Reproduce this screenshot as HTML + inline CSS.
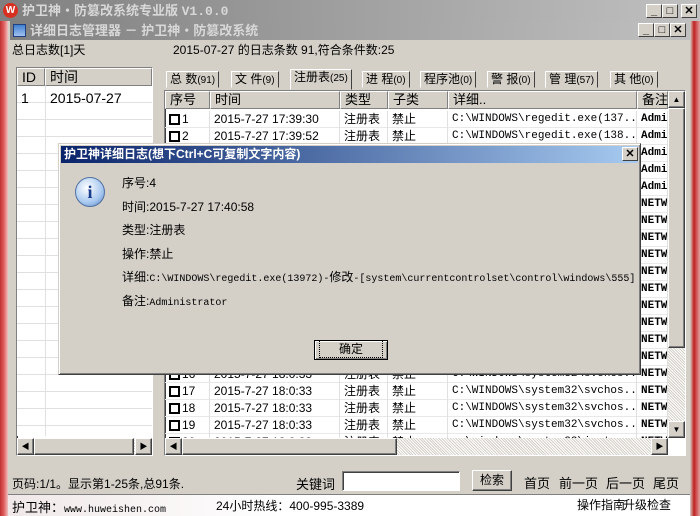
<!DOCTYPE html>
<html><head><meta charset="utf-8"><style>
*{box-sizing:border-box;margin:0;padding:0}
body{width:700px;height:516px;overflow:hidden;background:#d4d0c8;font-family:"Liberation Sans","WenQuanYi Zen Hei","Noto Sans CJK SC",sans-serif;font-size:12px;color:#000;position:relative}
.a{position:absolute;white-space:nowrap}
.tb{background:linear-gradient(90deg,#808080,#c0c0c0);color:#d8d8d8;font-weight:bold;font-size:13px}
.btn{background:#d4d0c8;border:1px solid;border-color:#fff #404040 #404040 #fff;box-shadow:inset -1px -1px #808080}
.sunk{border:1px solid;border-color:#808080 #fff #fff #808080;box-shadow:inset 1px 1px #404040}
.wbtn{position:absolute;width:16px;height:14px;background:#d4d0c8;border:1px solid;border-color:#fff #404040 #404040 #fff;font-size:11px;line-height:12px;text-align:center;font-weight:bold}
.hdr{position:absolute;top:0;height:18px;background:#d4d0c8;border-right:1px solid #808080;border-bottom:1px solid #808080;border-left:1px solid #fff;border-top:1px solid #fff;padding-left:4px;line-height:16px;font-size:13px}
.row{position:absolute;left:0;height:17px;border-bottom:1px solid #e8e8e8;width:503px;font-size:12px;line-height:16px}
.c{position:absolute;top:0;height:17px;border-right:1px solid #e0e0e0;padding-left:4px;overflow:hidden}
.mono{font-family:"Liberation Mono",monospace;font-size:11px}
.cb{display:inline-block;width:11px;height:11px;border:2px solid #000;vertical-align:-2px;margin-right:2px;background:#fff}
.tab{position:absolute;top:71px;height:17px;border:1px solid;border-color:#fff #404040 transparent #fff;padding:0 3px;line-height:15px;font-size:12px}
.sb{background:#e8e8e8;background-image:repeating-linear-gradient(45deg,#fff 0 1px,#d4d0c8 1px 2px)}
</style></head><body>
<div class="a tb" style="left:0;top:0;width:700px;height:21px;padding-left:22px;line-height:21px">护卫神・防篡改系统专业版 <span style="font-family:'Liberation Mono',monospace">V1.0.0</span></div>
<div class="a" style="left:3px;top:3px;width:15px;height:15px;border-radius:50%;background:#d83020;color:#fff;font-size:10px;line-height:15px;text-align:center;font-weight:bold">W</div>
<div class="wbtn" style="left:646px;top:4px">_</div><div class="wbtn" style="left:662px;top:4px">□</div><div class="wbtn" style="left:681px;top:4px">✕</div>
<div class="a" style="left:0;top:21px;width:8px;height:495px;background:linear-gradient(90deg,#c03030,#e06060,#f0c0c0)"></div>
<div class="a" style="left:690px;top:21px;width:10px;height:495px;background:linear-gradient(90deg,#d4d0c8,#c02020 40%,#e0a0a0)"></div>
<div class="a tb" style="left:10px;top:21px;width:680px;height:19px;padding-left:20px;line-height:19px">详细日志管理器 － 护卫神・防篡改系统</div>
<div class="a" style="left:13px;top:24px;width:13px;height:13px;background:linear-gradient(#4080d0,#a0c0f0);border:1px solid #204080"></div>
<div class="wbtn" style="left:638px;top:23px">_</div><div class="wbtn" style="left:654px;top:23px">□</div><div class="wbtn" style="left:670px;top:23px">✕</div>
<div class="a" style="left:12px;top:41px">总日志数[1]天</div>
<div class="a" style="left:173px;top:41px">2015-07-27 的日志条数 91,符合条件数:25</div>
<div class="a sunk" style="left:16px;top:67px;width:137px;height:389px;background:#fff;overflow:hidden">
 <div class="a" style="left:0;top:18px;width:137px;height:350px;background:repeating-linear-gradient(#fff 0 16px,#e0e0e0 16px 17px)"></div>
 <div class="hdr" style="left:0;width:28px;font-size:14px">ID</div><div class="hdr" style="left:28px;width:107px;font-size:14px">时间</div>
 <div class="a" style="left:4px;top:22px;font-size:14px">1</div><div class="a" style="left:33px;top:22px;font-size:14px">2015-07-27</div>
 <div class="a" style="left:28px;top:18px;width:1px;height:350px;background:#e0e0e0"></div>
 <div class="a sb" style="left:0;top:370px;width:135px;height:17px"></div>
 <div class="a btn" style="left:0;top:370px;width:17px;height:17px;font-size:8px;text-align:center;line-height:15px">◀</div>
 <div class="a btn" style="left:17px;top:370px;width:100px;height:17px"></div>
 <div class="a btn" style="left:118px;top:370px;width:17px;height:17px;font-size:8px;text-align:center;line-height:15px">▶</div>
</div>
<div class="tab" style="left:166px">总 数<span style="font-size:10px">(91)</span></div>
<div class="tab" style="left:231px">文 件<span style="font-size:10px">(9)</span></div>
<div class="tab" style="left:290px;top:69px;height:21px;background:#d4d0c8;z-index:2">注册表<span style="font-size:10px">(25)</span></div>
<div class="tab" style="left:362px">进 程<span style="font-size:10px">(0)</span></div>
<div class="tab" style="left:420px">程序池<span style="font-size:10px">(0)</span></div>
<div class="tab" style="left:487px">警 报<span style="font-size:10px">(0)</span></div>
<div class="tab" style="left:545px">管 理<span style="font-size:10px">(57)</span></div>
<div class="tab" style="left:610px">其 他<span style="font-size:10px">(0)</span></div>
<div class="a sunk" style="left:164px;top:90px;width:522px;height:366px;background:#fff;overflow:hidden">
 <div class="hdr" style="left:0;width:45px">序号</div><div class="hdr" style="left:45px;width:130px">时间</div><div class="hdr" style="left:175px;width:48px">类型</div><div class="hdr" style="left:223px;width:60px">子类</div><div class="hdr" style="left:283px;width:189px">详细..</div><div class="hdr" style="left:472px;width:31px">备注</div>
 <div id="rows"></div>
 <div class="a sb" style="left:503px;top:0;width:17px;height:347px"></div>
 <div class="a btn" style="left:503px;top:0;width:17px;height:17px;font-size:8px;text-align:center;line-height:15px">▲</div>
 <div class="a btn" style="left:503px;top:17px;width:17px;height:240px"></div>
 <div class="a btn" style="left:503px;top:330px;width:17px;height:17px;font-size:8px;text-align:center;line-height:15px">▼</div>
 <div class="a sb" style="left:0;top:347px;width:503px;height:17px"></div>
 <div class="a btn" style="left:0;top:347px;width:17px;height:17px;font-size:8px;text-align:center;line-height:15px">◀</div>
 <div class="a btn" style="left:17px;top:347px;width:215px;height:17px"></div>
 <div class="a btn" style="left:486px;top:347px;width:17px;height:17px;font-size:8px;text-align:center;line-height:15px">▶</div>
</div>
<script>
var h='';for(var i=1;i<=20;i++){var t=i==1?'2015-7-27 17:39:30':i==2?'2015-7-27 17:39:52':i<6?'2015-7-27 17:40:5'+i:'2015-7-27 18:0:33';
var d=i<3?'C:\\WINDOWS\\regedit.exe(13'+(6+i)+'...':i==20?'c:\\windows\\system32\\inetsr':'C:\\WINDOWS\\system32\\svchos...';
var n=i<6?'Admin':'NETWO';
h+='<div class="row" style="top:'+(20+(i-1)*17)+'px"><div class="c" style="left:0;width:45px"><span class="cb"></span>'+i+'</div><div class="c" style="left:45px;width:130px">'+t+'</div><div class="c" style="left:175px;width:48px">注册表</div><div class="c" style="left:223px;width:60px">禁止</div><div class="c mono" style="left:283px;width:189px">'+d+'</div><div class="c mono" style="left:472px;width:31px;font-weight:bold">'+n+'</div></div>';}
document.getElementById('rows').innerHTML=h;
</script>
<div class="a" style="left:12px;top:475px">页码:1/1。显示第1-25条,总91条.</div>
<div class="a" style="left:296px;top:474px;font-size:13px">关键词</div>
<div class="a sunk" style="left:342px;top:471px;width:118px;height:20px;background:#fff"></div>
<div class="a btn" style="left:472px;top:470px;width:40px;height:21px;text-align:center;line-height:19px">检索</div>
<div class="a" style="left:524px;top:473px;font-size:13px">首页</div>
<div class="a" style="left:559px;top:473px;font-size:13px">前一页</div>
<div class="a" style="left:606px;top:473px;font-size:13px">后一页</div>
<div class="a" style="left:653px;top:473px;font-size:13px">尾页</div>
<div class="a" style="left:8px;top:494px;width:682px;height:1px;background:#808080"></div>
<div class="a" style="left:8px;top:495px;width:682px;height:21px;background:linear-gradient(90deg,#f0e8e8,#fff 40%,#fff)"></div>
<div class="a" style="left:12px;top:497px;font-size:13px">护卫神：<span class="mono" style="font-size:10px">www.huweishen.com</span></div>
<div class="a" style="left:216px;top:497px">24小时热线：400-995-3389</div>
<div class="a" style="left:577px;top:496px;font-size:12px">操作指南</div>
<div class="a" style="left:623px;top:496px;font-size:12px">升级检查</div>
<div class="a" style="left:58px;top:143px;width:583px;height:232px;background:#d4d0c8;border:1px solid;border-color:#d4d0c8 #404040 #404040 #d4d0c8;box-shadow:inset 1px 1px #fff,inset -1px -1px #808080">
 <div class="a" style="left:2px;top:2px;width:577px;height:17px;background:linear-gradient(90deg,#0a246a,#a6caf0);color:#fff;font-weight:bold;font-size:12px;line-height:17px;padding-left:3px">护卫神详细日志(想下Ctrl+C可复制文字内容)</div>
 <div class="wbtn" style="left:563px;top:3px">✕</div>
 <div class="a" style="left:16px;top:33px;width:30px;height:30px;border-radius:50%;background:radial-gradient(circle at 40% 35%,#fff,#a8c8f0 60%,#5080c0);border:1px solid #5070a0;color:#1a3a8a;font:bold 18px 'Liberation Serif',serif;text-align:center;line-height:28px">i</div>
 <div class="a" style="left:63px;top:30px">序号:4</div>
 <div class="a" style="left:63px;top:54px">时间:2015-7-27 17:40:58</div>
 <div class="a" style="left:63px;top:77px">类型:注册表</div>
 <div class="a" style="left:63px;top:101px">操作:禁止</div>
 <div class="a" style="left:63px;top:124px">详细:<span class="mono" style="font-size:10px">C:\WINDOWS\regedit.exe(13972)-</span>修改<span class="mono" style="font-size:10px">-[system\currentcontrolset\control\windows\555]</span></div>
 <div class="a" style="left:63px;top:148px">备注:<span class="mono" style="font-size:10px">Administrator</span></div>
 <div class="a" style="left:255px;top:196px;width:74px;height:20px;border:1px solid #000;background:#d4d0c8;box-shadow:inset 1px 1px #fff,inset -1px -1px #808080;text-align:center;line-height:17px"><span style="outline:1px dotted #000;outline-offset:1px;padding:0 18px">确定</span></div>
</div>
</body></html>
